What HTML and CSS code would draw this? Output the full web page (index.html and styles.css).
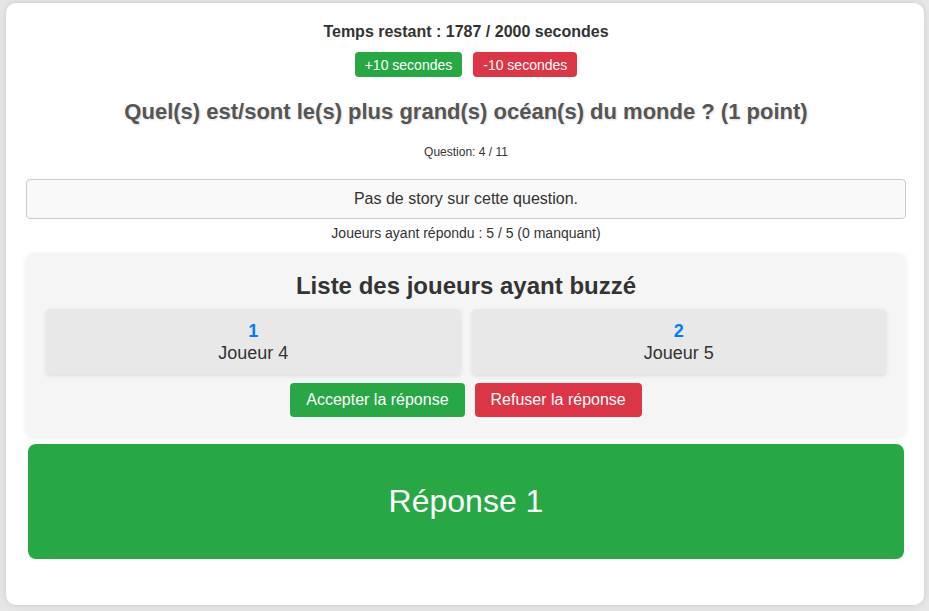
FILE: index.html
```html
<!DOCTYPE html>
<html lang="fr">
<head>
<meta charset="utf-8">
<title>Quiz</title>
<link rel="stylesheet" href="styles.css">
</head>
<body>
<div class="card">
  <div class="timer">Temps restant : 1787 / 2000 secondes</div>
  <div class="time-buttons">
    <button class="btn btn-small btn-green">+10 secondes</button>
    <button class="btn btn-small btn-red">-10 secondes</button>
  </div>
  <h2 class="question">Quel(s) est/sont le(s) plus grand(s) océan(s) du monde ? (1 point)</h2>
  <div class="counter">Question: 4 / 11</div>
  <div class="story">Pas de story sur cette question.</div>
  <div class="answered">Joueurs ayant répondu : 5 / 5 (0 manquant)</div>
  <div class="buzz-panel">
    <h3 class="buzz-title">Liste des joueurs ayant buzzé</h3>
    <div class="players">
      <div class="player"><span class="rank">1</span><span class="name">Joueur 4</span></div>
      <div class="player"><span class="rank">2</span><span class="name">Joueur 5</span></div>
    </div>
    <div class="actions">
      <button class="btn btn-big btn-green">Accepter la réponse</button>
      <button class="btn btn-big btn-red">Refuser la réponse</button>
    </div>
  </div>
  <div class="answer">Réponse 1</div>
</div>
</body>
</html>
```

FILE: styles.css
```css
* { box-sizing: border-box; }
html, body { margin: 0; padding: 0; }
body {
  background: #e6e6e6;
  font-family: "Liberation Sans", Arial, sans-serif;
  color: #333;
  padding: 3px 5px 6px 6px;
}
.card {
  background: #fff;
  border-radius: 10px;
  box-shadow: 0 0 6px rgba(0,0,0,0.12);
  padding: 20px 18px 46px 20px;
  height: 602px;
  text-align: center;
}
.timer {
  font-weight: bold;
  font-size: 16px;
  line-height: 18px;
}
.time-buttons {
  display: flex;
  justify-content: center;
  gap: 11px;
  margin-top: 11px;
}
.btn {
  border: none;
  color: #fff;
  font-family: "Liberation Sans", Arial, sans-serif;
  border-radius: 4px;
  cursor: pointer;
}
.btn-small {
  font-size: 14px;
  height: 25px;
  padding: 0 10px;
}
.btn-big {
  font-size: 16px;
  height: 34px;
  padding: 0 16px;
}
.btn-green { background: #28a745; }
.btn-red { background: #dc3545; }
.question {
  margin: 22px 0 0;
  font-size: 22px;
  line-height: 26px;
  color: #555;
  text-shadow: 1px 1px 2px rgba(0,0,0,0.15);
}
.counter {
  font-size: 12px;
  margin-top: 20px;
  line-height: 14px;
}
.story {
  margin-top: 20px;
  border: 1px solid #ccc;
  border-radius: 4px;
  background: #f9f9f9;
  height: 40px;
  line-height: 38px;
  font-size: 16px;
}
.answered {
  font-size: 14px;
  line-height: 16px;
  margin-top: 6px;
}
.buzz-panel {
  margin-top: 12px;
  background: #f5f5f5;
  border-radius: 8px;
  box-shadow: 0 2px 6px rgba(0,0,0,0.08);
  padding: 19px 20px 19px;
}
.buzz-title {
  margin: 0;
  font-size: 24px;
  line-height: 28px;
}
.players {
  display: grid;
  grid-template-columns: 1fr 1fr;
  gap: 11px;
  margin-top: 9px;
}
.player {
  background: #e8e8e8;
  border-radius: 4px;
  box-shadow: 0 2px 4px rgba(0,0,0,0.1);
  height: 65px;
  display: flex;
  flex-direction: column;
  justify-content: center;
  align-items: center;
}
.rank {
  color: #007bff;
  font-weight: bold;
  font-size: 18px;
  line-height: 22px;
}
.name {
  font-size: 18px;
  line-height: 22px;
}
.actions {
  display: flex;
  justify-content: center;
  gap: 10px;
  margin-top: 9px;
}
.answer {
  margin: 8px 2px 0;
  background: #28a745;
  border-radius: 8px;
  height: 115px;
  display: flex;
  align-items: center;
  justify-content: center;
  color: #fff;
  font-size: 32px;
}
```
